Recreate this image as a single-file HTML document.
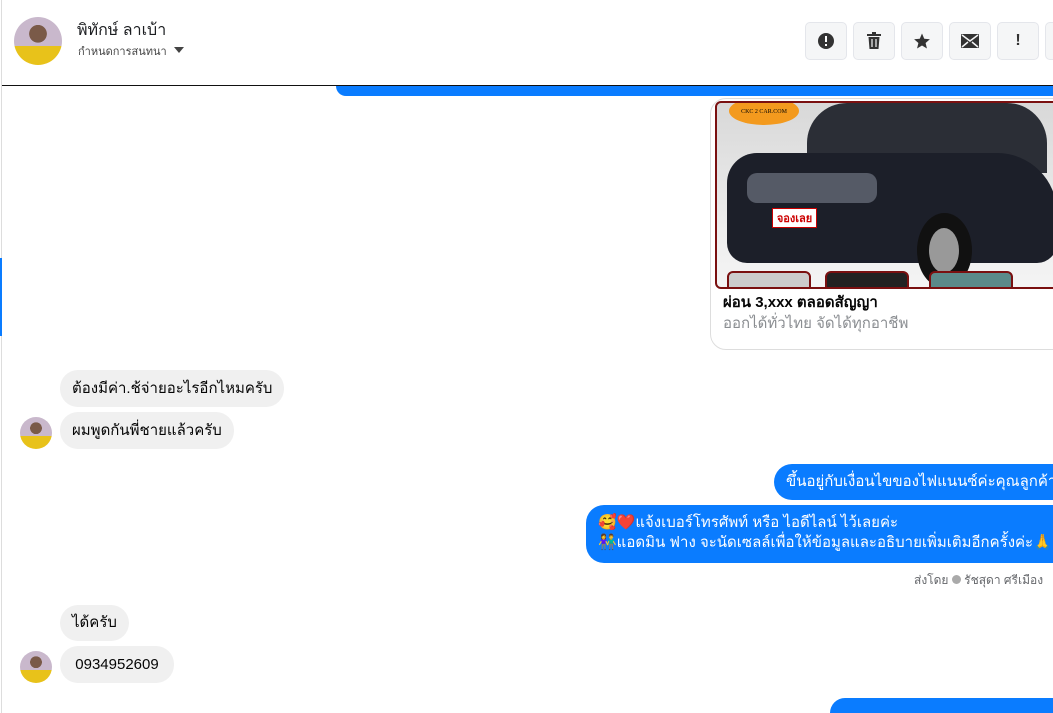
<!DOCTYPE html>
<html><head><meta charset="utf-8"><style>
*{margin:0;padding:0;box-sizing:border-box}
html,body{width:1053px;height:713px;overflow:hidden}
body{background:#fff;font-family:"Liberation Sans","Noto Sans CJK SC",sans-serif;position:relative;color:#050505}
.a{position:absolute}
.av{position:absolute;border-radius:50%;background:radial-gradient(circle at 50% 35%,#7a5a48 0 22%,transparent 23%),linear-gradient(#c9b8cc 0 60%,#e8c21a 60%);}
.bin{position:absolute;background:#f0f0f0;border-radius:18px;font-size:15px;padding:0 12px;line-height:37px;white-space:nowrap}
.bo{position:absolute;background:#0a7cff;color:#fff;border-radius:18px;font-size:15px;padding:0 12px;white-space:nowrap}
.btn{position:absolute;top:22px;width:42px;height:38px;border:1px solid #e4e6eb;background:#f5f6f7;border-radius:5px;display:flex;align-items:center;justify-content:center}
</style></head><body>
<div class="a" style="left:1px;top:0;width:1px;height:713px;background:#ddd"></div>
<div class="a" style="left:0;top:258px;width:2px;height:78px;background:#0a7cff"></div>
<div class="av" style="left:14px;top:17px;width:48px;height:48px"></div>
<div class="a" style="left:77px;top:18px;font-size:16px;color:#1c1e21">พิทักษ์ ลาเบ้า</div>
<div class="a" style="left:78px;top:42px;font-size:11px;color:#444">กำหนดการสนทนา <span style="display:inline-block;border:5px solid transparent;border-top:6px solid #444;margin-left:4px;vertical-align:-3px"></span></div>
<div class="btn" style="left:805px"><svg width="18" height="18" viewBox="0 0 18 18"><circle cx="9" cy="9" r="8" fill="#333"/><rect x="8" y="4" width="2" height="6" fill="#fff"/><rect x="8" y="12" width="2" height="2" fill="#fff"/></svg></div>
<div class="btn" style="left:853px"><svg width="16" height="18" viewBox="0 0 16 18"><rect x="1" y="2" width="14" height="2" fill="#333"/><rect x="6" y="0" width="4" height="2" fill="#333"/><path d="M2.5 5h11l-1 12h-9z" fill="#333"/><path d="M6 7v8M10 7v8" stroke="#f5f6f7" stroke-width="1.2"/></svg></div>
<div class="btn" style="left:901px"><svg width="18" height="18" viewBox="0 0 24 24"><path d="M12 2l3 7 7.5.6-5.7 5 1.8 7.4L12 18l-6.6 4 1.8-7.4-5.7-5L9 9z" fill="#333"/></svg></div>
<div class="btn" style="left:949px"><svg width="18" height="14" viewBox="0 0 18 14"><rect width="18" height="14" rx="1" fill="#333"/><path d="M1 1l8 6 8-6M1 13l6-5M17 13l-6-5" stroke="#f5f6f7" stroke-width="1.5" fill="none"/></svg></div>
<div class="btn" style="left:997px;font-size:16px;color:#333;font-weight:bold">!</div>
<div class="btn" style="left:1045px"></div>
<div class="a" style="left:2px;top:85px;width:1051px;height:1px;background:#111"></div>
<div class="a" style="left:336px;top:86px;width:717px;height:10px;background:#0a7cff;border-radius:0 0 0 12px"></div>
<div class="a" style="left:710px;top:98px;width:360px;height:252px;border:1px solid #ddd;border-radius:16px;overflow:hidden">
 <div class="a" style="left:4px;top:2px;width:360px;height:188px;background:linear-gradient(#d8d8d8,#eee 70%,#f4f4f4);border:2px solid #7a1010;border-radius:6px;overflow:hidden">
  <div class="a" style="left:12px;top:-6px;width:70px;height:28px;border-radius:50%;background:#f39a1e;font-size:6px;text-align:center;padding-top:12px;font-family:'Liberation Serif',serif">CKC 2 CAR.COM</div>
  <div class="a" style="left:90px;top:0;width:240px;height:70px;background:#2b2e36;border-radius:40px 40px 0 0"></div>
  <div class="a" style="left:10px;top:50px;width:330px;height:110px;background:#1c1f29;border-radius:30px 60px 20px 20px"></div>
  <div class="a" style="left:30px;top:70px;width:130px;height:30px;background:#555a66;border-radius:10px"></div>
  <div class="a" style="left:200px;top:110px;width:55px;height:75px;background:#111;border-radius:50%"></div>
  <div class="a" style="left:212px;top:125px;width:30px;height:45px;background:#999;border-radius:50%"></div>
  <div class="a" style="left:55px;top:105px;width:45px;height:20px;background:#fff;border:1px solid #c00;color:#c00;font-size:11px;font-weight:bold;text-align:center">จองเลย</div>
  <div class="a" style="left:10px;top:168px;width:84px;height:30px;background:#ccc;border:2px solid #7a1010;border-radius:6px"></div>
  <div class="a" style="left:108px;top:168px;width:84px;height:30px;background:#222;border:2px solid #7a1010;border-radius:6px"></div>
  <div class="a" style="left:212px;top:168px;width:84px;height:30px;background:#5b8a8a;border:2px solid #7a1010;border-radius:6px"></div>
 </div>
 <div class="a" style="left:12px;top:191px;font-size:15px;font-weight:bold">ผ่อน 3,xxx ตลอดสัญญา</div>
 <div class="a" style="left:12px;top:212px;font-size:15px;color:#8a8d91">ออกได้ทั่วไทย จัดได้ทุกอาชีพ</div>
</div>
<div class="bin" style="left:60px;top:370px">ต้องมีค่า.ช้จ่ายอะไรอีกไหมครับ</div>
<div class="av" style="left:20px;top:417px;width:32px;height:32px"></div>
<div class="bin" style="left:60px;top:412px">ผมพูดกันพี่ชายแล้วครับ</div>
<div class="bo" style="left:774px;top:464px;line-height:36px;border-radius:18px 0 0 18px;width:300px">ขึ้นอยู่กับเงื่อนไขของไฟแนนซ์ค่ะคุณลูกค้า</div>
<div class="bo" style="left:586px;top:505px;height:58px;padding-top:8px;line-height:20px;border-radius:18px 0 0 18px;width:480px">🥰❤️แจ้งเบอร์โทรศัพท์ หรือ ไอดีไลน์  ไว้เลยค่ะ<br>👫แอดมิน ฟาง จะนัดเซลล์เพื่อให้ข้อมูลและอธิบายเพิ่มเติมอีกครั้งค่ะ🙏</div>
<div class="a" style="left:914px;top:571px;font-size:12px;color:#65676b;white-space:nowrap">ส่งโดย <span style="display:inline-block;width:9px;height:9px;border-radius:50%;background:#aaa"></span> รัชสุดา ศรีเมือง</div>
<div class="bin" style="left:60px;top:605px;line-height:36px">ได้ครับ</div>
<div class="av" style="left:20px;top:651px;width:32px;height:32px"></div>
<div class="bin" style="left:60px;top:646px;width:114px;text-align:center">0934952609</div>
<div class="a" style="left:830px;top:698px;width:240px;height:15px;background:#0a7cff;border-radius:15px 0 0 0"></div>
</body></html>
